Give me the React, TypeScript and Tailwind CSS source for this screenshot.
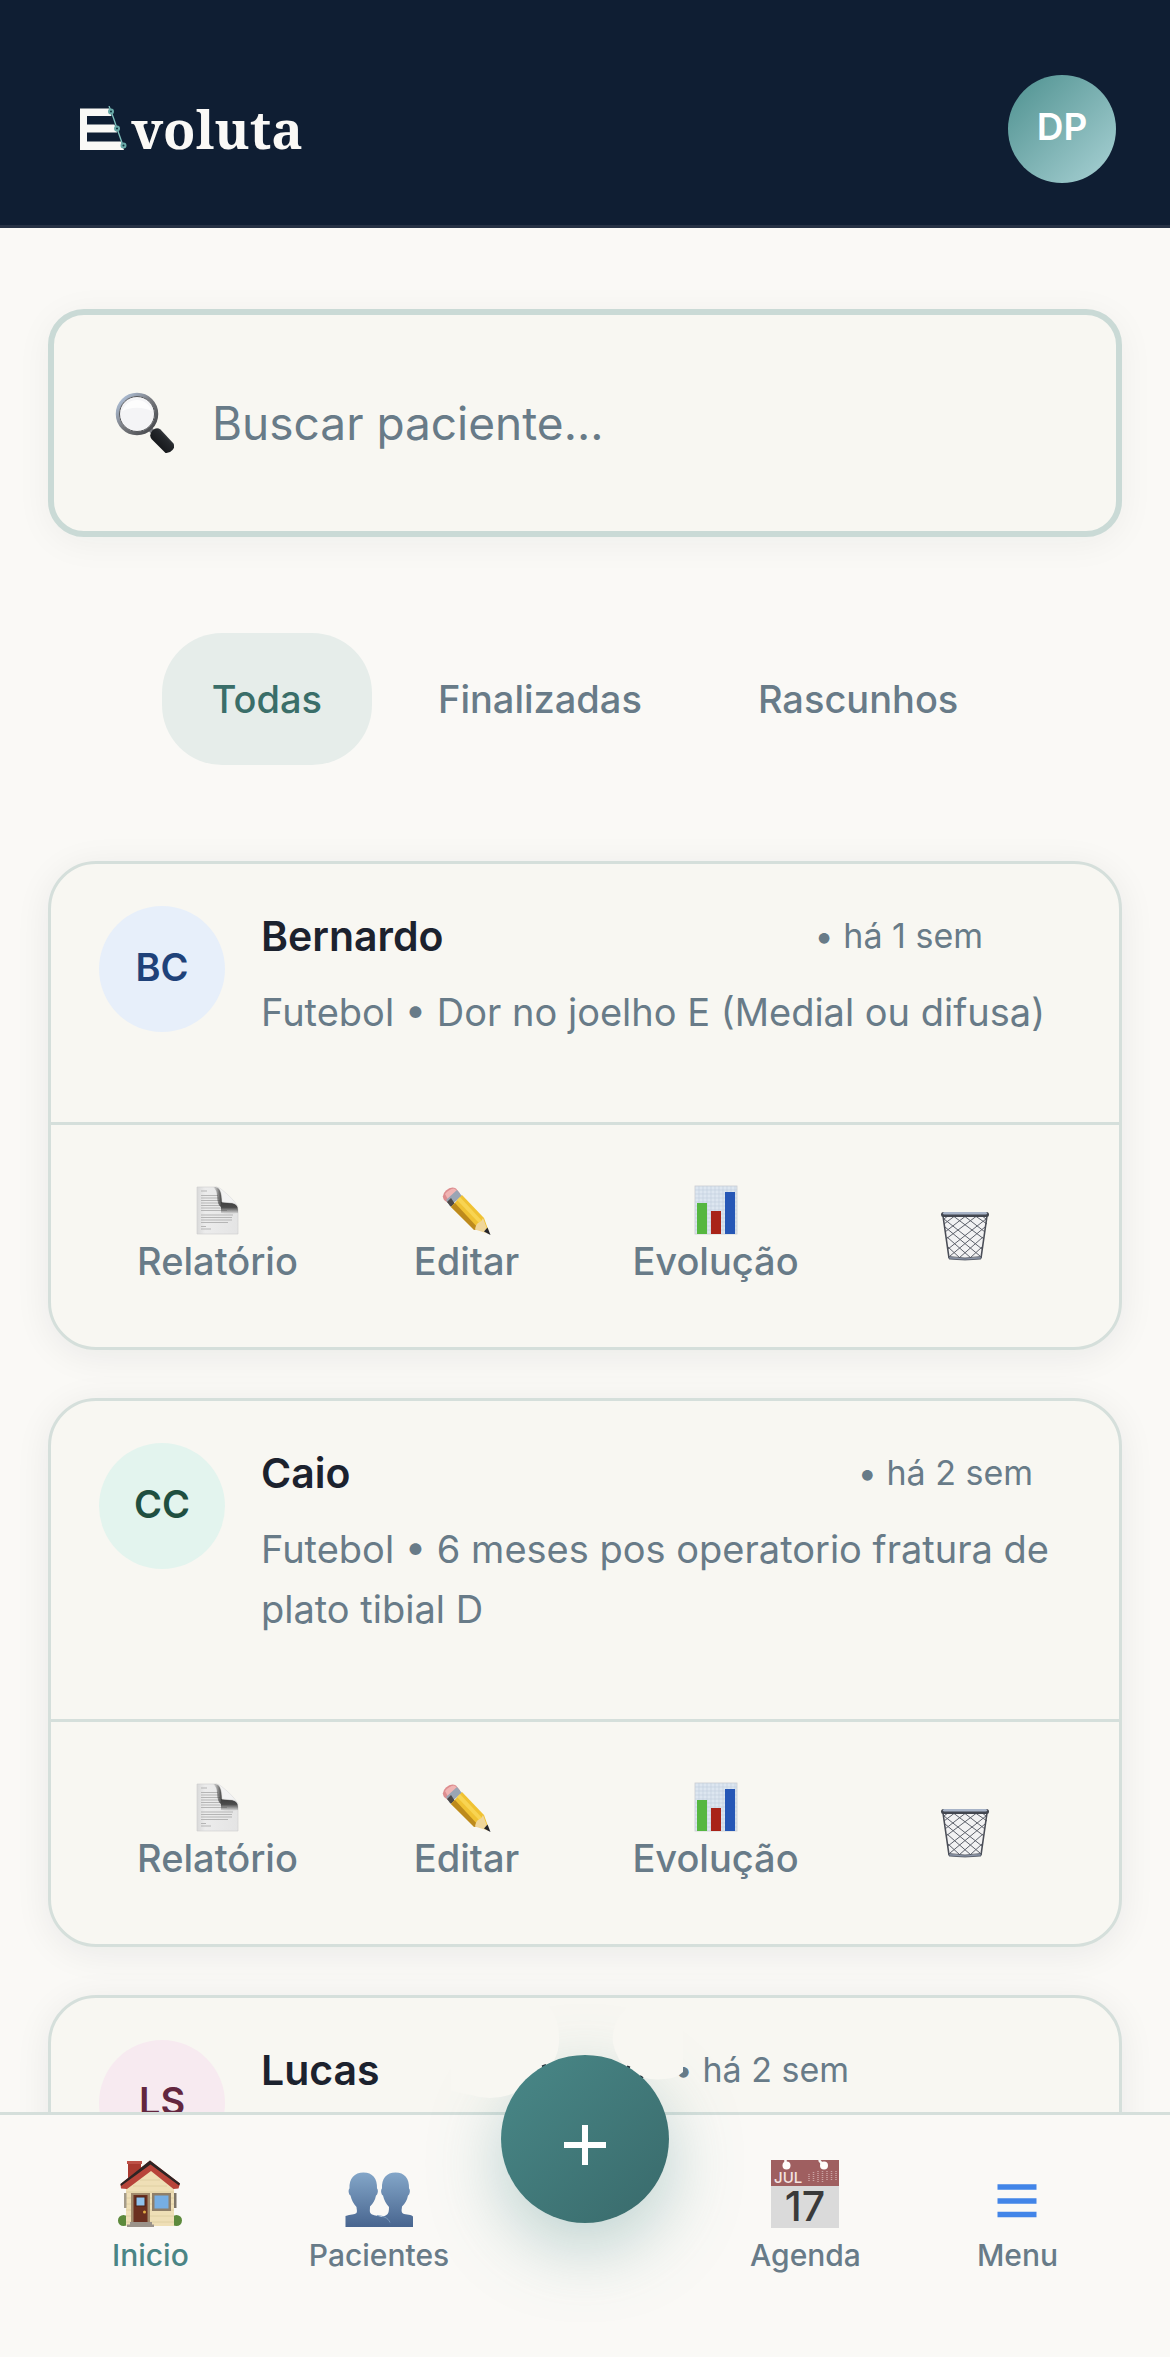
import { useState, type ReactNode } from 'react';

interface Patient {
    id: number;
    initials: string;
    name: string;
    detail?: string;
    when: string;
    avatarClass: string;
    whenClass: string;
}

const patients: Patient[] = [
    {
        id: 1,
        initials: 'BC',
        name: 'Bernardo',
        detail: 'Futebol • Dor no joelho E (Medial ou difusa)',
        when: '• há 1 sem',
        avatarClass: 'bg-[#e7effa] text-[#1f4279]',
        whenClass: 'mr-[88px]',
    },
    {
        id: 2,
        initials: 'CC',
        name: 'Caio',
        detail: 'Futebol • 6 meses pos operatorio fratura de plato tibial D',
        when: '• há 2 sem',
        avatarClass: 'bg-[#e3f4ee] text-[#1f4f40]',
        whenClass: 'mr-[38px]',
    },
    {
        id: 3,
        initials: 'LS',
        name: 'Lucas',
        when: '• há 2 sem',
        avatarClass: 'bg-[#f7eaf0] text-[#63263f]',
        whenClass: 'mr-[222px]',
    },
];

const filters = ['Todas', 'Finalizadas', 'Rascunhos'];

function LogoMark() {
    return (
        <svg width="50" height="46" viewBox="0 0 50 46" aria-hidden="true">
            <path d="M0 2.500h29l2.500 7.500H7v8.500h27.500l2.500 8H7v9h34l3 8.500H0z" fill="#faf9f6" />
            <path d="M29 0l4.500 12 3 9 7 20" fill="none" stroke="#7fc0bd" strokeWidth="1.300" />
            <g fill="#12343f" stroke="#69aaa8" strokeWidth="2">
                <circle cx="31" cy="5.500" r="2" />
                <circle cx="37" cy="22.500" r="2" />
                <circle cx="43.500" cy="39.500" r="2" />
            </g>
        </svg>
    );
}

function SearchIcon() {
    return (
        <svg width="60" height="62" viewBox="0 0 60 62" className="shrink-0" aria-hidden="true">
            <defs>
                <linearGradient id="rim" x1="0" y1="0" x2="1" y2="1">
                    <stop offset="0" stopColor="#b9cde8" />
                    <stop offset=".5" stopColor="#77797e" />
                    <stop offset="1" stopColor="#3f4145" />
                </linearGradient>
                <linearGradient id="handle" x1="0" y1="1" x2="1" y2="0">
                    <stop offset="0" stopColor="#08090b" />
                    <stop offset=".6" stopColor="#25282c" />
                    <stop offset="1" stopColor="#6d7378" />
                </linearGradient>
            </defs>
            <path d="M35 36l6 6" stroke="#7b7d82" strokeWidth="5" />
            <path d="M38.500 38.500q4-4 8-1l13 14q2 3-1 6.500t-7 3l-14-14q-3-4 1-8.500z" fill="url(#handle)" />
            <circle cx="23" cy="22" r="19.500" fill="#f4f4f6" stroke="url(#rim)" strokeWidth="3.500" />
            <path d="M8 19.500a15.500 15.500 0 0 1 30 0c-8-5-22-5-30 0z" fill="#ffffff" opacity=".8" />
            <circle cx="23" cy="22" r="17.500" fill="none" stroke="#55575b" strokeWidth="1" />
        </svg>
    );
}

function ReportIcon() {
    return (
        <svg width="50" height="50" viewBox="0 0 50 50" aria-hidden="true">
            <defs>
                <linearGradient id="sheet" x1="0" y1="0" x2="1" y2="0">
                    <stop offset="0" stopColor="#d9d9d9" />
                    <stop offset=".2" stopColor="#ececec" />
                    <stop offset="1" stopColor="#e4e4e4" />
                </linearGradient>
                <linearGradient id="foldShade" x1="0" y1="0" x2="0" y2="1">
                    <stop offset="0" stopColor="#3f3f3f" />
                    <stop offset=".45" stopColor="#4c4c4c" />
                    <stop offset="1" stopColor="#4c4c4c" stopOpacity="0" />
                </linearGradient>
                <linearGradient id="foldSide" x1="0" y1="0" x2="1" y2="0">
                    <stop offset="0" stopColor="#4a4a4a" stopOpacity="0" />
                    <stop offset="1" stopColor="#3a3a3a" />
                </linearGradient>
            </defs>
            <path d="M4 2h19q6 1 6 15l10 1q6 1 6 7v24H4z" fill="url(#sheet)" stroke="#cfcfcf" strokeWidth=".6" />
            <g stroke="#b5b5b5" strokeWidth="1">
                <path d="M8 6h6M8 10.500h17M8 13h18M8 15.500h19M8 18h19M8 20.500h20M8 23h21M8 25.500h26M8 30h32M8 32.500h31M8 35h31M8 37.500h27M8 41.500h5M8 44h10" />
            </g>
            <path d="M20 2h3q6 1 6 15v6q-5-3-5-12 0-6-4-9z" fill="url(#foldSide)" />
            <path d="M28 17l11 1q6 1 6 7v3q-9 2-17 0z" fill="url(#foldShade)" />
            <path d="M23 2q6 1 6 15l11 1q4 1 5 4Q41 14 28 4q-2-2-5-2z" fill="#f3f3f3" stroke="#d5d5d5" strokeWidth=".5" />
        </svg>
    );
}

function PencilIcon() {
    return (
        <svg width="50" height="50" viewBox="0 0 50 50" aria-hidden="true">
            <path d="M2 15q-3-5 2-9.500t10-2l4 5-10 11z" fill="#dd8d8f" />
            <path d="M3 9q4-5 9-5.500l3 2-9 9z" fill="#f0b4b3" />
            <path d="M8 21l-4-6 11-10 5 6z" fill="#9aa5b4" />
            <path d="M9 22l-4-5 4-4 4 6z" fill="#4d4a4a" />
            <path d="M9 22L20 10l22 23 5 14-15-3z" fill="#f0c233" />
            <path d="M9 22l4-4 24 26-5 1z" fill="#bd8a1c" />
            <path d="M15 15l3-3 23 25-3 2z" fill="#f8d452" />
            <path d="M33 44.500q1-6 4-7t4-4.500l6 16z" fill="#f0d69a" />
            <path d="M42 46.500l3.500-4 3 7.500z" fill="#24242a" />
        </svg>
    );
}

function ChartIcon() {
    return (
        <svg width="50" height="50" viewBox="0 0 50 50" aria-hidden="true">
            <rect x="4" y="1" width="42" height="48" fill="#dde6f0" stroke="#c8ccd2" strokeWidth=".8" />
            <path
                d="M8 1v48M12 1v48M16 1v48M20 1v48M24 1v48M28 1v48M32 1v48M36 1v48M40 1v48M44 1v48M4 5h42M4 9h42M4 13h42M4 17h42M4 21h42M4 25h42M4 29h42M4 33h42M4 37h42M4 41h42M4 45h42"
                stroke="#c3d0e0"
                strokeWidth=".7"
            />
            <rect x="6" y="18" width="10" height="31" fill="#56b740" />
            <rect x="20" y="26" width="10" height="23" fill="#a92318" />
            <rect x="34" y="7" width="10" height="42" fill="#2657b6" />
        </svg>
    );
}

function TrashIcon() {
    return (
        <svg width="50" height="50" viewBox="0 0 50 50" aria-hidden="true">
            <path d="M3 4h44l-5 43H9z" fill="#f2f2f3" />
            <g fill="none" stroke="#5e626c" strokeWidth="1">
                <path d="M4 8l38 30M5 16l35 29M7 26l24 21M8 36l12 11M12 4l32 24M23 4l22 17M34 4l13 9M41 4l5 4" />
                <path d="M46 8L8 38M45 16L10 45M43 26L19 47M42 36L30 47M38 4L6 28M27 4L5 21M16 4L4 13M9 4L4 8" />
            </g>
            <path d="M3 5l6 42M47 5l-6 42" stroke="#4b4e57" strokeWidth="1.600" />
            <path d="M9 45.500q16 3 32 0v2.500q-16 2-32 0z" fill="#8b95a8" stroke="#4b505c" strokeWidth=".8" />
            <rect x="1" y="1" width="48" height="5" rx="2.500" fill="#434750" />
            <rect x="3" y="1" width="44" height="2.400" rx="1.200" fill="#a7b3c7" />
        </svg>
    );
}

function HomeIcon() {
    return (
        <svg width="70" height="70" viewBox="0 0 70 70" aria-hidden="true">
            <rect x="13" y="2" width="13" height="20" fill="#a93a30" />
            <rect x="12" y="2" width="15" height="3" fill="#bd5147" />
            <circle cx="8.500" cy="61.500" r="5.500" fill="#5d8a3c" />
            <circle cx="61.500" cy="61.500" r="5.500" fill="#5d8a3c" />
            <path d="M11 26L35 8l24 18v41H11z" fill="#efdfb6" />
            <path d="M11 33h48M11 39h48M11 45h48M11 51h48M11 57h48M11 63h48M18 27h34M25 21h20" stroke="#dccb9f" strokeWidth=".8" />
            <path d="M35 1.500l30 23-1.500 5-5 .5L36 12 12 30l-6-.5L5.500 25z" fill="#b8443a" />
            <path d="M35 1.500l30 23-1 2L35.500 5.500 6 27l-.5-2z" fill="#2d2424" />
            <rect x="9" y="34" width="2.500" height="15" fill="#a59c8a" />
            <rect x="59" y="34" width="2.500" height="15" fill="#7d7568" />
            <rect x="16" y="34" width="19" height="30" fill="#a18b6d" />
            <rect x="18.500" y="36" width="14" height="27" fill="#6b3020" />
            <rect x="21" y="38" width="9" height="9" fill="#8fc1ec" stroke="#4c2015" />
            <circle cx="29.500" cy="53" r="1.500" fill="#e2ae45" />
            <rect x="37" y="34" width="19" height="18" fill="#8f7f69" />
            <rect x="39.500" y="36.500" width="14" height="13" fill="#76aee3" />
            <path d="M15 63h22v2.500h2V68H12v-2.500h3z" fill="#9b938a" />
        </svg>
    );
}

function PatientsIcon() {
    return (
        <svg width="70" height="70" viewBox="0 0 70 70" aria-hidden="true">
            <defs>
                <linearGradient id="bust" x1="0" y1="13" x2="0" y2="68" gradientUnits="userSpaceOnUse">
                    <stop offset="0" stopColor="#84a7c9" />
                    <stop offset="1" stopColor="#48658f" />
                </linearGradient>
            </defs>
            <path
                d="M19.500 13.500c9 0 14 6 13.500 16 1.500 1 1 6-1 7-1 5-3 8-6 11 0 4-1 6 2 8 5 2 17 1 17 12.500H1.500V57c5-2 9-1 11-3 1-2 0-4 0-6-3-3-5-7-6-11.500-2-1-2.500-6-1-7C5 19.500 10.500 13.500 19.500 13.500z"
                fill="url(#bust)"
            />
            <path
                d="M51.500 13.500c9 0 14 6 13.500 16 1.500 1 1 6-1 7-1 5-3 8-6 11 0 2-1 4 0 6 2 3 8 1 11 4v10.500H40L38 58c5-2 7-2 7-10-3-3-5-7-6-11.500-2-1-2.500-6-1-7C37.500 19.500 42.500 13.500 51.500 13.500z"
                fill="url(#bust)"
            />
            <path d="M33 56.500c6 .5 11 2 13 7" fill="none" stroke="#7c9cc0" strokeWidth=".9" />
        </svg>
    );
}

function CalendarIcon() {
    return (
        <svg width="70" height="70" viewBox="0 0 70 70" aria-hidden="true">
            <rect x="1" y="1" width="68" height="68" fill="#dadada" />
            <rect x="1" y="1" width="68" height="26" fill="#9f5f60" />
            <path d="M15.500 0v6M49 1l4 5" stroke="#faf9f6" strokeWidth="2.500" />
            <circle cx="16.500" cy="6.500" r="4" fill="#fffdfb" />
            <circle cx="54" cy="6.500" r="4" fill="#fffdfb" />
            <path d="M39 15v8M43.500 13v10M48 12v11M52.500 12v11M57 12v9M61.500 12v9M66 12v9" stroke="#cba4a3" strokeWidth="1.500" strokeDasharray="1 1" />
            <text x="4" y="23.500" fontSize="15" fill="#f4e4e2" fontFamily="Inter, sans-serif">JUL</text>
            <text x="35" y="62" fontSize="41" fontWeight="500" textAnchor="middle" fill="#3a3a3a" fontFamily="Inter, sans-serif">17</text>
        </svg>
    );
}

function MenuIcon() {
    return (
        <svg width="70" height="70" viewBox="0 0 70 70" aria-hidden="true">
            <path d="M15.500 28h39M15.500 42h39M15.500 55.500h39" stroke="#4285e8" strokeWidth="5.500" />
        </svg>
    );
}

function CardAction({ icon, label, ariaLabel }: { icon: ReactNode; label?: string; ariaLabel?: string }) {
    return (
        <button
            type="button"
            aria-label={ariaLabel}
            className="flex flex-col items-center justify-center text-[38px] leading-[52px] font-medium text-[#687b88]"
        >
            {icon}
            {label}
        </button>
    );
}

function PatientCard({ patient }: { patient: Patient }) {
    return (
        <article className="shrink-0 rounded-[48px] border-[3px] border-[#d5dfdb] bg-[#f8f7f2] shadow-[0_6px_36px_rgba(20,30,40,0.07)]">
            <div className="flex gap-9 px-12 pt-[42px] pb-20">
                <div className={`flex size-[126px] shrink-0 items-center justify-center rounded-full pb-1 text-[38px] font-semibold ${patient.avatarClass}`}>
                    {patient.initials}
                </div>
                <div className="min-w-0 flex-1">
                    <div className="flex items-center justify-between leading-[60px]">
                        <h2 className="text-[41px] font-semibold text-[#1c222e]">{patient.name}</h2>
                        <span className={`text-[34px] text-[#687b88] ${patient.whenClass}`}>{patient.when}</span>
                    </div>
                    {patient.detail && (
                        <p className="mt-4 text-[38px] leading-[60px] text-[#687b88]">{patient.detail}</p>
                    )}
                </div>
            </div>
            <div className="grid grid-cols-4 border-t-[3px] border-[#d5dfdb] py-[60px] pr-[30px] pl-[42px]">
                <CardAction icon={<ReportIcon />} label="Relatório" />
                <CardAction icon={<PencilIcon />} label="Editar" />
                <CardAction icon={<ChartIcon />} label="Evolução" />
                <CardAction icon={<TrashIcon />} ariaLabel="Excluir" />
            </div>
        </article>
    );
}

function NavItem({ icon, label, active }: { icon: ReactNode; label: string; active?: boolean }) {
    return (
        <a
            href="#"
            className={`flex flex-col items-center gap-2 text-[30px] leading-9 font-medium ${active ? 'text-[#4a8585]' : 'text-[#687b88]'}`}
        >
            {icon}
            {label}
        </a>
    );
}

// Round "new" button that floats over the top edge of the bottom bar
function AddButton() {
    return (
        <div className="absolute -top-[60px] left-1/2 size-[168px] -translate-x-1/2">
            <div className="absolute inset-0 rounded-full shadow-[0_24px_72px_rgba(74,139,139,0.36)]" />
            <svg viewBox="0 0 250 120" width="250" height="120" className="absolute -top-[60px] -left-[50px]" aria-hidden="true">
                <path d="M18 8h76q15 12 14 40-1 17-14 28L72 94Q46 108 20 100L0 96V20z" fill="#f8f7f2" />
                <path d="M176 12q-16 14-14 36 3 17 18 30 15 8 34 6 12-1 18-7V30q-20-22-56-18z" fill="#f8f7f2" />
                <path d="M91 71.500l4-1.500M176 71.500l3 1M189 81l3 2" stroke="#26303a" strokeWidth="2" />
            </svg>
            <button
                type="button"
                aria-label="Nova avaliação"
                className="relative flex size-full items-center justify-center rounded-full bg-linear-135 from-[#498888] to-[#396a6b]"
            >
                <svg width="42" height="52" viewBox="0 0 42 52" aria-hidden="true">
                    <path d="M0 32h42M21 12v40" stroke="#ffffff" strokeWidth="6" />
                </svg>
            </button>
        </div>
    );
}

export default function App() {
    const [filter, setFilter] = useState('Todas');
    const [query, setQuery] = useState('');

    return (
        <div className="flex h-screen flex-col overflow-hidden bg-[#faf9f6] font-[Inter,sans-serif]">
            <header className="flex shrink-0 items-center justify-between border-b-[3px] border-[#263144] bg-[#0f1e33] pt-[75px] pr-[54px] pb-[42px] pl-20">
                <a href="#" aria-label="Evoluta" className="flex items-center gap-px text-[53px] leading-[60px] font-bold text-[#faf9f6]">
                    <LogoMark />
                    <span className="font-['Noto_Serif','Liberation_Serif',serif]">voluta</span>
                </a>
                <button
                    type="button"
                    className="flex size-[108px] items-center justify-center rounded-full bg-linear-135 from-[#4d9190] to-[#a9d2d5] pb-1 text-[37px] font-semibold text-white"
                >
                    DP
                </button>
            </header>

            <main className="flex min-h-0 flex-1 flex-col overflow-y-auto px-12 pt-[81px] [scrollbar-width:none]">
                <div className="flex h-[228px] shrink-0 items-center gap-[38px] rounded-[36px] border-6 border-[#cadad6] bg-[#f8f7f2] px-[60px] shadow-[0_6px_36px_rgba(20,30,40,0.05)]">
                    <SearchIcon />
                    <input
                        type="text"
                        aria-label="Buscar paciente"
                        value={query}
                        onChange={e => setQuery(e.target.value)}
                        placeholder="Buscar paciente..."
                        className="min-w-0 flex-1 bg-transparent text-[46px] leading-[60px] text-[#1c222e] outline-none placeholder:text-[#687b88]"
                    />
                </div>

                <div className="my-24 flex shrink-0 justify-center gap-4">
                    {filters.map(f => (
                        <button
                            key={f}
                            type="button"
                            aria-pressed={filter === f}
                            onClick={() => setFilter(f)}
                            className={`h-[132px] rounded-[60px] px-[50px] text-[38px] font-medium ${filter === f ? 'bg-[#e6edea] text-[#3a6e69]' : 'text-[#687b88]'}`}
                        >
                            {f}
                        </button>
                    ))}
                </div>

                <section className="flex flex-col gap-12">
                    {patients.map(p => (
                        <PatientCard key={p.id} patient={p} />
                    ))}
                </section>
            </main>

            <nav className="relative shrink-0 border-t-[3px] border-[#d5dfdb] bg-[#faf9f6] px-28 pt-11 pb-[84px]">
                <div className="flex justify-between">
                    <div className="flex gap-[120px]">
                        <NavItem icon={<HomeIcon />} label="Inicio" active />
                        <NavItem icon={<PatientsIcon />} label="Pacientes" />
                    </div>
                    <div className="flex gap-[116px]">
                        <NavItem icon={<CalendarIcon />} label="Agenda" />
                        <NavItem icon={<MenuIcon />} label="Menu" />
                    </div>
                </div>
                <AddButton />
            </nav>
        </div>
    );
}
